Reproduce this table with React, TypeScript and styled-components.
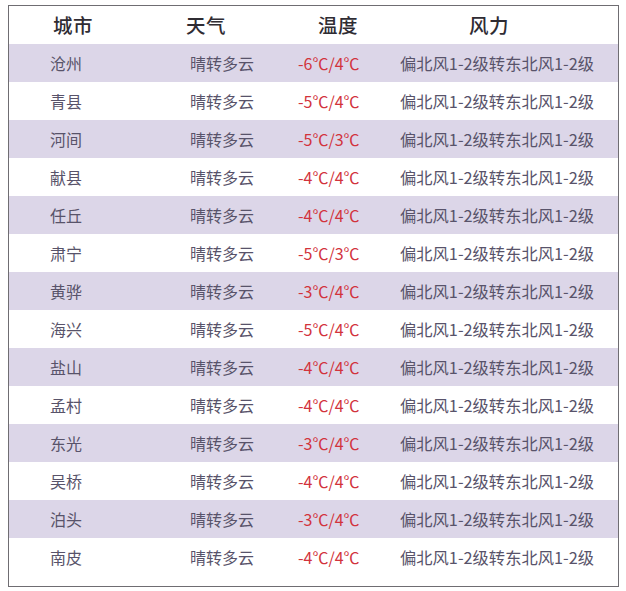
import React from 'react';
import styled, { createGlobalStyle } from 'styled-components';

interface Forecast {
  city: string;
  weather: string;
  temp: string;
  wind: string;
}

const rows: Forecast[] = [
  { city: '沧州', weather: '晴转多云', temp: '-6℃/4℃', wind: '偏北风1-2级转东北风1-2级' },
  { city: '青县', weather: '晴转多云', temp: '-5℃/4℃', wind: '偏北风1-2级转东北风1-2级' },
  { city: '河间', weather: '晴转多云', temp: '-5℃/3℃', wind: '偏北风1-2级转东北风1-2级' },
  { city: '献县', weather: '晴转多云', temp: '-4℃/4℃', wind: '偏北风1-2级转东北风1-2级' },
  { city: '任丘', weather: '晴转多云', temp: '-4℃/4℃', wind: '偏北风1-2级转东北风1-2级' },
  { city: '肃宁', weather: '晴转多云', temp: '-5℃/3℃', wind: '偏北风1-2级转东北风1-2级' },
  { city: '黄骅', weather: '晴转多云', temp: '-3℃/4℃', wind: '偏北风1-2级转东北风1-2级' },
  { city: '海兴', weather: '晴转多云', temp: '-5℃/4℃', wind: '偏北风1-2级转东北风1-2级' },
  { city: '盐山', weather: '晴转多云', temp: '-4℃/4℃', wind: '偏北风1-2级转东北风1-2级' },
  { city: '孟村', weather: '晴转多云', temp: '-4℃/4℃', wind: '偏北风1-2级转东北风1-2级' },
  { city: '东光', weather: '晴转多云', temp: '-3℃/4℃', wind: '偏北风1-2级转东北风1-2级' },
  { city: '吴桥', weather: '晴转多云', temp: '-4℃/4℃', wind: '偏北风1-2级转东北风1-2级' },
  { city: '泊头', weather: '晴转多云', temp: '-3℃/4℃', wind: '偏北风1-2级转东北风1-2级' },
  { city: '南皮', weather: '晴转多云', temp: '-4℃/4℃', wind: '偏北风1-2级转东北风1-2级' }
];

const GlobalStyle = createGlobalStyle`
  html, body {
    margin: 0;
    padding: 0;
    background: #ffffff;
  }

  body {
    font-family: "Noto Sans CJK SC", "Noto Sans", sans-serif;
  }
`;

const Page = styled.div`
  width: 626px;
  height: 591px;
  padding: 5px 0 0 8px;
  box-sizing: border-box;
`;

const Frame = styled.div`
  width: 611px;
  height: 582px;
  box-sizing: border-box;
  border: 1.5px solid #6f6d72;
  display: flex;
  flex-direction: column;
`;

const Row = styled.div<{ $striped?: boolean; $height: number }>`
  display: grid;
  grid-template-columns: 140px 108px 102px 1fr;
  align-items: center;
  height: ${({ $height }) => $height}px;
  padding-left: 41px;
  background: ${({ $striped }) => ($striped ? '#dcd6e8' : '#ffffff')};
  flex-shrink: 0;
`;

const HeadRow = styled(Row)`
  padding-bottom: 2px;
  box-sizing: border-box;
`;

const HeadCell = styled.div<{ $shift: number }>`
  margin-left: ${({ $shift }) => $shift}px;
  font-size: 19.5px;
  font-weight: 500;
  color: #2f2c33;
  letter-spacing: 0.5px;
  white-space: nowrap;
`;

const Cell = styled.div<{ $tone?: 'red' }>`
  font-size: 16px;
  color: ${({ $tone }) => ($tone === 'red' ? '#d2333c' : '#58536a')};
  white-space: nowrap;
`;

const WindCell = styled(Cell)`
  font-size: 16.3px;
`;

const LastRowSpacer = styled.div`
  flex: 1;
`;

const App: React.FC = () => {
  return (
    <Page>
      <GlobalStyle />
      <Frame>
        <HeadRow $height={38}>
          <HeadCell $shift={3}>城市</HeadCell>
          <HeadCell $shift={-4}>天气</HeadCell>
          <HeadCell $shift={20}>温度</HeadCell>
          <HeadCell $shift={69}>风力</HeadCell>
        </HeadRow>
        {rows.map((row, index) => (
          <Row
            $height={38}
            $striped={index % 2 === 0}
            key={row.city}
          >
            <Cell>{row.city}</Cell>
            <Cell>{row.weather}</Cell>
            <Cell $tone='red'>{row.temp}</Cell>
            <WindCell>{row.wind}</WindCell>
          </Row>
        ))}
        <LastRowSpacer />
      </Frame>
    </Page>
  );
};

export default App;
